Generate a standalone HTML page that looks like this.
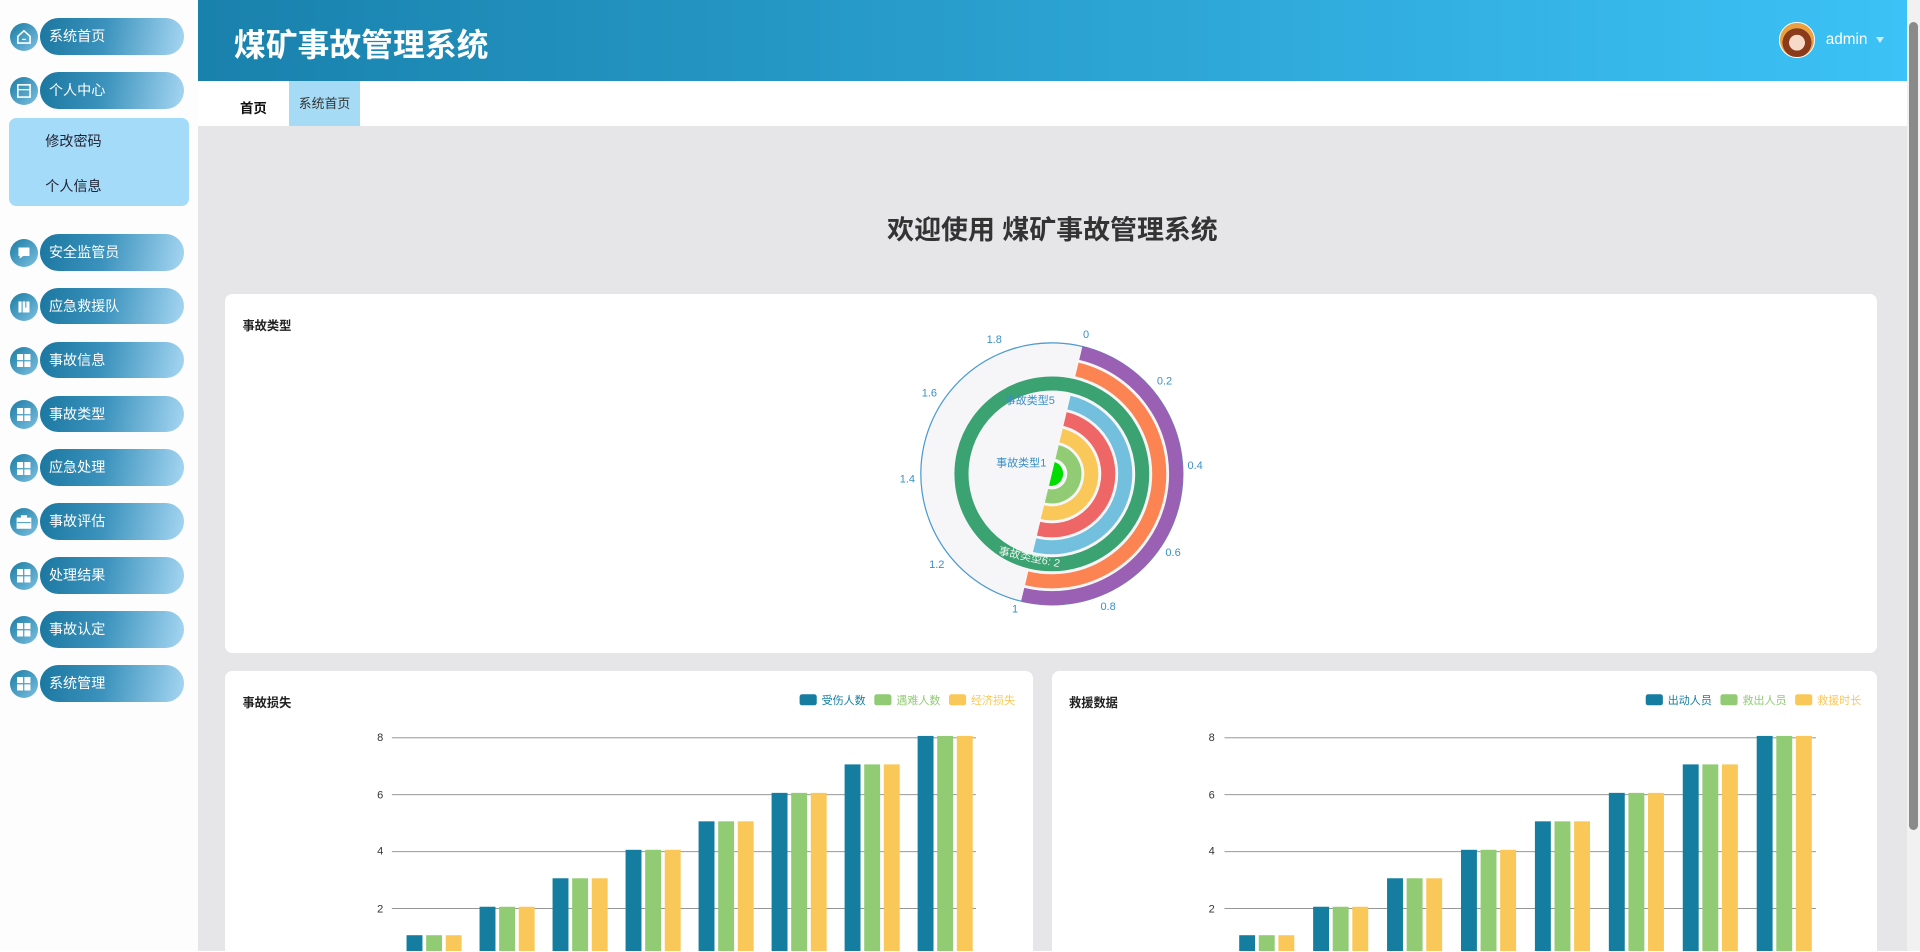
<!DOCTYPE html>
<html><head><meta charset="utf-8">
<style>
*{margin:0;padding:0;box-sizing:border-box}
html,body{width:1920px;height:952px;overflow:hidden;background:#fff}
#root{zoom:1.2245;width:1568px;height:777px;position:relative;overflow:hidden;font-family:"Liberation Sans","Noto Sans CJK SC",sans-serif}
.side{position:absolute;left:0;top:0;width:162px;height:777px;background:#fdfdfe}
.it{position:absolute;left:8px;height:30px;width:143px}
.ic{position:absolute;left:0;top:4px;width:23px;height:23px;border-radius:50%;background:linear-gradient(135deg,#1a7ca3,#7cc0e2)}
.pill{position:absolute;left:25px;top:0;width:117px;height:30px;border-radius:15px;background:linear-gradient(100deg,#1a77a0 0%,#3c93bd 45%,#a6d6f2 100%);color:#fff;font-size:11.5px;line-height:30px;padding-left:7px}
.sub{position:absolute;left:7px;top:96px;width:147px;height:72px;background:#a3dbf9;border-radius:6px}
.sub div{position:absolute;left:30px;font-size:11.5px;color:#223}
.hdr{position:absolute;left:162px;top:0;width:1395px;height:66px;background:linear-gradient(90deg,#1981ac,#3cc2f6)}
.hdr h1{position:absolute;left:29px;top:16px;color:#fff;font-size:26px;font-weight:bold}
.tabs{position:absolute;left:162px;top:66px;width:1395px;height:37px;background:#fff}
.main{position:absolute;left:162px;top:103px;width:1395px;height:674px;background:#e6e6e9;overflow:hidden}
.card{position:absolute;background:#fff;border-radius:6px}
.ct{position:absolute;font-size:10px;color:#222;font-weight:bold}
.scr{position:absolute;left:1557px;top:0;width:11px;height:777px;background:#f1f1f1}
.scr div{position:absolute;left:2px;top:18px;width:7px;height:660px;background:#8a8a8a;border-radius:4px}
</style></head><body><div id="root">
<div class="side">
  <div class="it" style="top:15px"><div class="ic"><svg style="position:absolute;left:5px;top:5px" width="13" height="13" viewBox="0 0 13 13"><path d="M1.5 6L6.5 1.5 11.5 6V11.5H1.5Z" fill="none" stroke="#fff" stroke-width="1.3"/><path d="M5 8.5h3" stroke="#fff"/></svg></div><div class="pill">系统首页</div></div>
  <div class="it" style="top:59px"><div class="ic"><svg style="position:absolute;left:5px;top:5px" width="13" height="13"><rect x="1.5" y="1.5" width="10" height="10" fill="none" stroke="#fff" stroke-width="1.3"/><path d="M1.5 5.5h10" stroke="#fff"/></svg></div><div class="pill">个人中心</div></div>
  <div class="sub"><div style="top:11px">修改密码</div><div style="top:48px">个人信息</div></div>
  <div class="it" style="top:191px"><div class="ic"><svg style="position:absolute;left:5px;top:5px" width="13" height="13"><path d="M2 2h9v7H6l-3 2V9H2z" fill="#fff"/></svg></div><div class="pill">安全监管员</div></div>
  <div class="it" style="top:235px"><div class="ic"><svg style="position:absolute;left:5px;top:5px" width="13" height="13"><path d="M2 2h9v9H2z" fill="#fff"/><path d="M5 2v9M8 2v5" stroke="#5aa6cc"/></svg></div><div class="pill">应急救援队</div></div>
  <div class="it" style="top:279px"><div class="ic"><svg style="position:absolute;left:6px;top:6px" width="11" height="11"><path d="M0 0h5v5H0zM6 0h5v5H6zM0 6h5v5H0zM6 6h5v5H6z" fill="#fff"/></svg></div><div class="pill">事故信息</div></div>
  <div class="it" style="top:323px"><div class="ic"><svg style="position:absolute;left:6px;top:6px" width="11" height="11"><path d="M0 0h5v5H0zM6 0h5v5H6zM0 6h5v5H0zM6 6h5v5H6z" fill="#fff"/></svg></div><div class="pill">事故类型</div></div>
  <div class="it" style="top:367px"><div class="ic"><svg style="position:absolute;left:6px;top:6px" width="11" height="11"><path d="M0 0h5v5H0zM6 0h5v5H6zM0 6h5v5H0zM6 6h5v5H6z" fill="#fff"/></svg></div><div class="pill">应急处理</div></div>
  <div class="it" style="top:411px"><div class="ic"><svg style="position:absolute;left:5px;top:5px" width="13" height="13"><path d="M4.5 3V1.5h4V3M1 3.5h11v8H1z" fill="#fff" stroke="#fff"/><path d="M1 7h11" stroke="#5aa6cc"/></svg></div><div class="pill">事故评估</div></div>
  <div class="it" style="top:455px"><div class="ic"><svg style="position:absolute;left:6px;top:6px" width="11" height="11"><path d="M0 0h5v5H0zM6 0h5v5H6zM0 6h5v5H0zM6 6h5v5H6z" fill="#fff"/></svg></div><div class="pill">处理结果</div></div>
  <div class="it" style="top:499px"><div class="ic"><svg style="position:absolute;left:6px;top:6px" width="11" height="11"><path d="M0 0h5v5H0zM6 0h5v5H6zM0 6h5v5H0zM6 6h5v5H6z" fill="#fff"/></svg></div><div class="pill">事故认定</div></div>
  <div class="it" style="top:543px"><div class="ic"><svg style="position:absolute;left:6px;top:6px" width="11" height="11"><path d="M0 0h5v5H0zM6 0h5v5H6zM0 6h5v5H0zM6 6h5v5H6z" fill="#fff"/></svg></div><div class="pill">系统管理</div></div>
</div>
<div class="hdr"><h1>煤矿事故管理系统</h1>
  <div style="position:absolute;left:1291px;top:18px;width:29px;height:29px;border-radius:50%;background:radial-gradient(circle at 50% 58%,#f6d9c6 0 30%,#8a3b1c 31% 55%,#e9a040 56%);border:1.5px solid #fff"></div>
  <div style="position:absolute;left:1329px;top:25px;color:#fff;font-size:12.5px">admin</div>
  <div style="position:absolute;left:1370px;top:30px;width:0;height:0;border-left:4px solid transparent;border-right:4px solid transparent;border-top:5px solid #cfeefc"></div>
</div>
<div class="tabs">
  <div style="position:absolute;left:34px;top:13px;font-size:11px;font-weight:bold;color:#111">首页</div>
  <div style="position:absolute;left:74px;top:0;width:58px;height:37px;background:#a6dbf6;font-size:10.5px;color:#333;text-align:center;line-height:38px">系统首页</div>
</div>
<div class="main">
  <div style="position:absolute;left:0;width:1395px;top:67px;text-align:center;font-size:22px;font-weight:bold;color:#333">欢迎使用 煤矿事故管理系统</div>
  <div class="card" style="left:22px;top:137px;width:1349px;height:293px"><div class="ct" style="left:14px;top:18px">事故类型</div></div>
  <div class="card" style="left:22px;top:445px;width:660px;height:300px"><div class="ct" style="left:14px;top:18px">事故损失</div></div>
  <div class="card" style="left:697px;top:445px;width:674px;height:300px"><div class="ct" style="left:14px;top:18px">救援数据</div></div>
</div>
<svg style="position:absolute;left:0;top:0" width="1557" height="777" font-family="Liberation Sans,Noto Sans CJK SC,sans-serif">
  <g>
    <circle cx="859" cy="387" r="107" fill="#f6f6f8" stroke="#4a9ad0" stroke-width="1"/>
    <g fill="none" stroke-width="11.5" transform="rotate(-76.5 859 387)">
      <circle cx="859" cy="387" r="101.5" stroke="#9a60b4" stroke-dasharray="318.9 1000"/>
      <circle cx="859" cy="387" r="87.7" stroke="#fc8452" stroke-dasharray="275.5 1000"/>
      <circle cx="859" cy="387" r="73.8" stroke="#3ba272"/>
      <circle cx="859" cy="387" r="59.9" stroke="#73c0de" stroke-dasharray="188.2 1000"/>
      <circle cx="859" cy="387" r="46.1" stroke="#ee6666" stroke-dasharray="144.8 1000"/>
      <circle cx="859" cy="387" r="32.2" stroke="#fac858" stroke-dasharray="101.2 1000"/>
      <circle cx="859" cy="387" r="18.4" stroke="#91cc75" stroke-dasharray="57.8 1000"/>
    </g>
    <path d="M859 387 L861.3 377.3 A10 10 0 0 1 856.7 396.7 Z" fill="#00dd00"/>
    <g font-size="9" fill="#3a8fc7" text-anchor="middle">
      <text x="887" y="276">0</text><text x="951" y="314">0.2</text><text x="976" y="383">0.4</text>
      <text x="958" y="454">0.6</text><text x="905" y="498">0.8</text><text x="829" y="500">1</text>
      <text x="765" y="464">1.2</text><text x="741" y="394">1.4</text><text x="759" y="324">1.6</text><text x="812" y="280">1.8</text>
      <text x="841" y="330">事故类型5</text><text x="834" y="381">事故类型1</text>
    </g>
    <text x="840" y="458" font-size="9" fill="#eaf5ee" transform="rotate(12 840 458)" text-anchor="middle">事故类型6: 2</text>
  </g>
  <g font-size="9" fill="#333" text-anchor="end">
    <g stroke="#888" stroke-width="0.7"><path d="M320 602.5H797M320 649H797M320 695.5H797M320 742H797"/><path d="M1000 602.5H1483M1000 649H1483M1000 695.5H1483M1000 742H1483"/></g>
    <text x="313" y="605">8</text><text x="313" y="652">6</text><text x="313" y="698">4</text><text x="313" y="745">2</text>
    <text x="992" y="605">8</text><text x="992" y="652">6</text><text x="992" y="698">4</text><text x="992" y="745">2</text>
  </g>
  <g id="bars1"></g><g id="bars2"></g>
  <g font-size="9">
    <rect x="653" y="567" width="14" height="9" rx="2" fill="#157ea0"/><text x="671" y="575" fill="#157ea0">受伤人数</text>
    <rect x="714" y="567" width="14" height="9" rx="2" fill="#91cc75"/><text x="732" y="575" fill="#91cc75">遇难人数</text>
    <rect x="775" y="567" width="14" height="9" rx="2" fill="#fac858"/><text x="793" y="575" fill="#fac858">经济损失</text>
    <rect x="1344" y="567" width="14" height="9" rx="2" fill="#157ea0"/><text x="1362" y="575" fill="#157ea0">出动人员</text>
    <rect x="1405" y="567" width="14" height="9" rx="2" fill="#91cc75"/><text x="1423" y="575" fill="#91cc75">救出人员</text>
    <rect x="1466" y="567" width="14" height="9" rx="2" fill="#fac858"/><text x="1484" y="575" fill="#fac858">救援时长</text>
  </g>
</svg>
<div class="scr"><div></div></div>
</div>
<script>
function bars(id,x0,x1){var g=document.getElementById(id),w=(x1-x0)/8,c=["#157ea0","#91cc75","#fac858"],s="";
for(var i=0;i<8;i++){var v=i+1,y=787-23.25*v;for(var j=0;j<3;j++){s+='<rect x="'+(x0+i*w+12+j*16)+'" y="'+y+'" width="13" height="'+(23.25*v)+'" fill="'+c[j]+'"/>';}}
g.innerHTML=s;}
bars("bars1",320,797);bars("bars2",1000,1483);
</script>
</body></html>
